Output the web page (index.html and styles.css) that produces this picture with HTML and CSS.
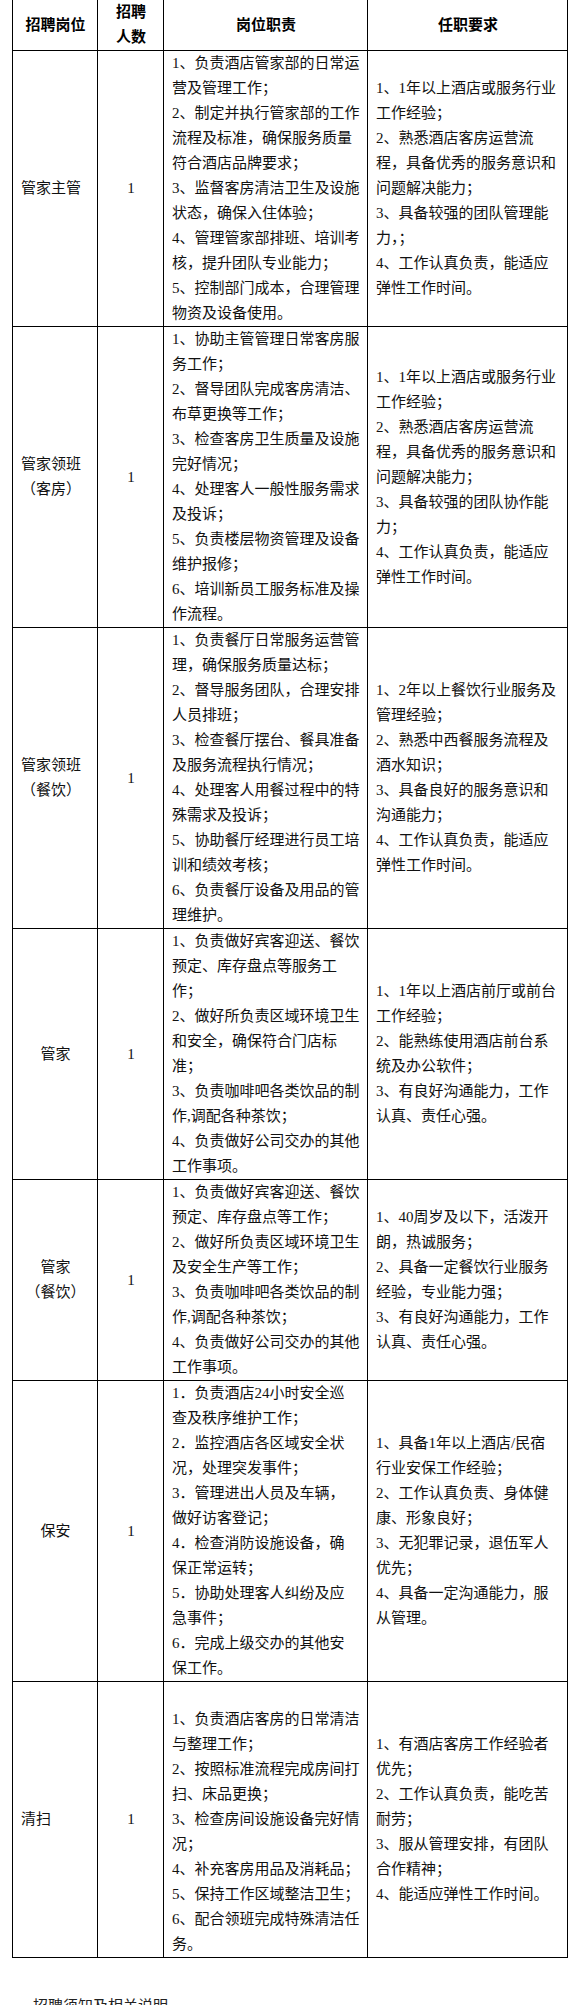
FILE: index.html
```html
<!DOCTYPE html>
<html lang="zh-CN">
<head>
<meta charset="utf-8">
<title>招聘岗位</title>
<link rel="stylesheet" href="styles.css">
</head>
<body>
<table class="jobs">
  <colgroup>
    <col class="c-post">
    <col class="c-num">
    <col class="c-duty">
    <col class="c-req">
  </colgroup>
  <thead>
    <tr>
      <th>招聘岗位</th>
      <th>招聘<br>人数</th>
      <th>岗位职责</th>
      <th>任职要求</th>
    </tr>
  </thead>
  <tbody>
    <tr>
      <td class="post">管家主管</td>
      <td class="num">1</td>
      <td class="duty">1、负责酒店管家部的日常运<br>营及管理工作；<br>2、制定并执行管家部的工作<br>流程及标准，确保服务质量<br>符合酒店品牌要求；<br>3、监督客房清洁卫生及设施<br>状态，确保入住体验；<br>4、管理管家部排班、培训考<br>核，提升团队专业能力；<br>5、控制部门成本，合理管理<br>物资及设备使用。</td>
      <td class="req">1、1年以上酒店或服务行业<br>工作经验；<br>2、熟悉酒店客房运营流<br>程，具备优秀的服务意识和<br>问题解决能力；<br>3、具备较强的团队管理能<br>力，；<br>4、工作认真负责，能适应<br>弹性工作时间。</td>
    </tr>
    <tr>
      <td class="post">管家领班<br>（客房）</td>
      <td class="num">1</td>
      <td class="duty">1、协助主管管理日常客房服<br>务工作；<br>2、督导团队完成客房清洁、<br>布草更换等工作；<br>3、检查客房卫生质量及设施<br>完好情况；<br>4、处理客人一般性服务需求<br>及投诉；<br>5、负责楼层物资管理及设备<br>维护报修；<br>6、培训新员工服务标准及操<br>作流程。</td>
      <td class="req">1、1年以上酒店或服务行业<br>工作经验；<br>2、熟悉酒店客房运营流<br>程，具备优秀的服务意识和<br>问题解决能力；<br>3、具备较强的团队协作能<br>力；<br>4、工作认真负责，能适应<br>弹性工作时间。</td>
    </tr>
    <tr>
      <td class="post">管家领班<br>（餐饮）</td>
      <td class="num">1</td>
      <td class="duty">1、负责餐厅日常服务运营管<br>理，确保服务质量达标；<br>2、督导服务团队，合理安排<br>人员排班；<br>3、检查餐厅摆台、餐具准备<br>及服务流程执行情况；<br>4、处理客人用餐过程中的特<br>殊需求及投诉；<br>5、协助餐厅经理进行员工培<br>训和绩效考核；<br>6、负责餐厅设备及用品的管<br>理维护。</td>
      <td class="req">1、2年以上餐饮行业服务及<br>管理经验；<br>2、熟悉中西餐服务流程及<br>酒水知识；<br>3、具备良好的服务意识和<br>沟通能力；<br>4、工作认真负责，能适应<br>弹性工作时间。</td>
    </tr>
    <tr>
      <td class="post center">管家</td>
      <td class="num">1</td>
      <td class="duty">1、负责做好宾客迎送、餐饮<br>预定、库存盘点等服务工<br>作；<br>2、做好所负责区域环境卫生<br>和安全，确保符合门店标<br>准；<br>3、负责咖啡吧各类饮品的制<br>作,调配各种茶饮；<br>4、负责做好公司交办的其他<br>工作事项。</td>
      <td class="req">1、1年以上酒店前厅或前台<br>工作经验；<br>2、能熟练使用酒店前台系<br>统及办公软件；<br>3、有良好沟通能力，工作<br>认真、责任心强。</td>
    </tr>
    <tr>
      <td class="post center">管家<br>（餐饮）</td>
      <td class="num">1</td>
      <td class="duty">1、负责做好宾客迎送、餐饮<br>预定、库存盘点等工作；<br>2、做好所负责区域环境卫生<br>及安全生产等工作；<br>3、负责咖啡吧各类饮品的制<br>作,调配各种茶饮；<br>4、负责做好公司交办的其他<br>工作事项。</td>
      <td class="req">1、40周岁及以下，活泼开<br>朗，热诚服务；<br>2、具备一定餐饮行业服务<br>经验，专业能力强；<br>3、有良好沟通能力，工作<br>认真、责任心强。</td>
    </tr>
    <tr>
      <td class="post center">保安</td>
      <td class="num">1</td>
      <td class="duty">1．负责酒店24小时安全巡<br>查及秩序维护工作；<br>2．监控酒店各区域安全状<br>况，处理突发事件；<br>3．管理进出人员及车辆，<br>做好访客登记；<br>4．检查消防设施设备，确<br>保正常运转；<br>5．协助处理客人纠纷及应<br>急事件；<br>6．完成上级交办的其他安<br>保工作。</td>
      <td class="req">1、具备1年以上酒店/民宿<br>行业安保工作经验；<br>2、工作认真负责、身体健<br>康、形象良好；<br>3、无犯罪记录，退伍军人<br>优先；<br>4、具备一定沟通能力，服<br>从管理。</td>
    </tr>
    <tr>
      <td class="post">清扫</td>
      <td class="num">1</td>
      <td class="duty lead-gap">1、负责酒店客房的日常清洁<br>与整理工作；<br>2、按照标准流程完成房间打<br>扫、床品更换；<br>3、检查房间设施设备完好情<br>况；<br>4、补充客房用品及消耗品；<br>5、保持工作区域整洁卫生；<br>6、配合领班完成特殊清洁任<br>务。</td>
      <td class="req">1、有酒店客房工作经验者<br>优先；<br>2、工作认真负责，能吃苦<br>耐劳；<br>3、服从管理安排，有团队<br>合作精神；<br>4、能适应弹性工作时间。</td>
    </tr>
  </tbody>
</table>
<p class="note">招聘须知及相关说明</p>
</body>
</html>
```

FILE: styles.css
```css
html, body {
  margin: 0;
  padding: 0;
  background: #fff;
}

body {
  font-family: "Liberation Serif", "Noto Sans CJK SC", sans-serif;
  font-size: 15px;
  line-height: 25px;
  color: #111;
}

.jobs {
  border-collapse: collapse;
  table-layout: fixed;
  width: 555px;
  margin: -1px 0 0 12px;
}

.c-post { width: 85px; }
.c-num { width: 66px; }
.c-duty { width: 204px; }
.c-req { width: 200px; }

.jobs th,
.jobs td {
  border: 1px solid #000;
  padding: 0 7px 0 8px;
  vertical-align: middle;
  white-space: nowrap;
  overflow: hidden;
}

.jobs th {
  font-weight: bold;
  text-align: center;
  color: #000;
}

.jobs .post {
  text-align: left;
}

.jobs .post.center {
  text-align: center;
}

.jobs .num {
  text-align: center;
}

.jobs .duty,
.jobs .req {
  text-align: left;
}

.jobs td.lead-gap {
  padding-top: 25px;
}

.note {
  margin: 36px 0 0 0;
  padding-left: 33px;
  color: #222;
}
```
